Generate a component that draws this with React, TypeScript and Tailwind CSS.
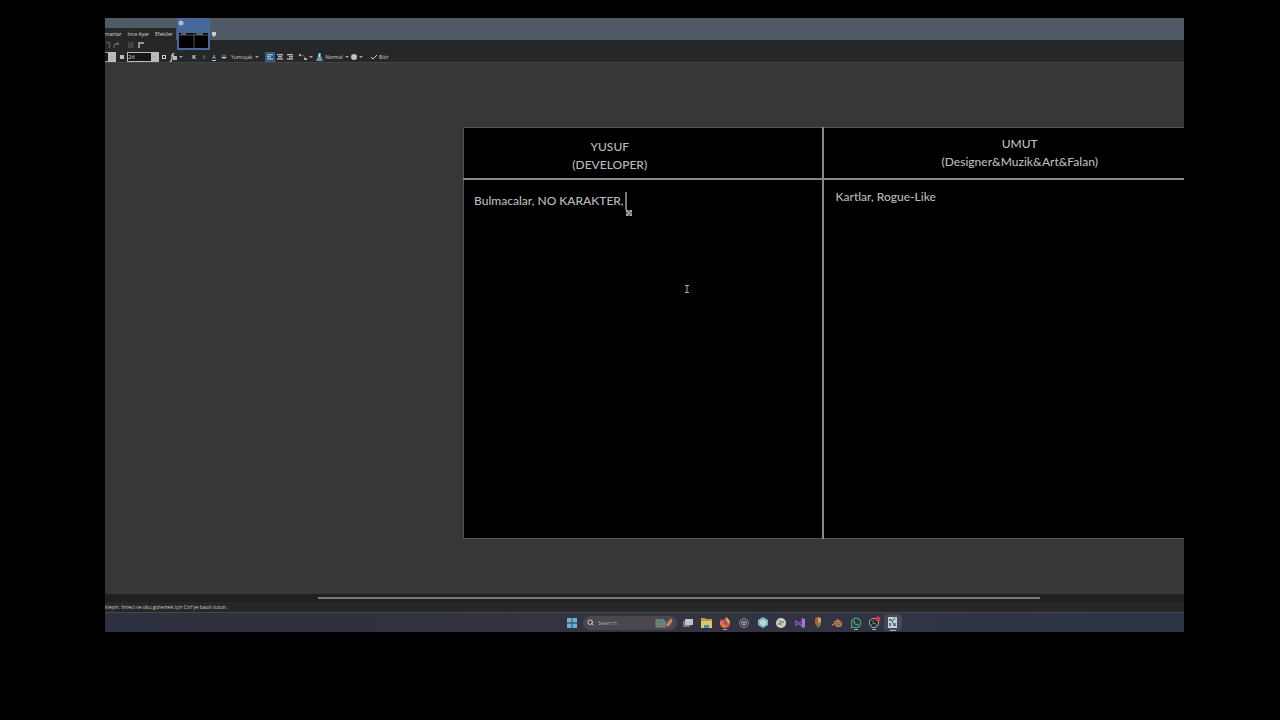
import type { ReactNode } from 'react'
import { Search } from 'lucide-react'
import { FaWhatsapp } from 'react-icons/fa'
import { SiBlender, SiUnity } from 'react-icons/si'

const Caret = () => (
  <svg viewBox="0 0 4 4" className="h-1 w-1 shrink-0" fill="#aaa">
    <path d="M0 1H4L2 3Z" />
  </svg>
)

const ToolButton = ({ label, children }: { label: string; children: ReactNode }) => (
  <button type="button" aria-label={label} className="flex h-2.5 w-2.5 items-center justify-center leading-none">
    {children}
  </button>
)

const AlignIcon = ({ side }: { side: 'left' | 'center' | 'right' }) => {
  const x = { left: 0, center: 1, right: 2 }[side]
  return (
    <svg viewBox="0 0 8 8" className="h-2 w-2" fill="#b4b4b4">
      <rect x="1" y="1" width="6" height="1.4" />
      <rect x={1 + x} y="3" width="4" height="1.4" />
      <rect x="1" y="5.2" width="6" height="1.4" />
    </svg>
  )
}

const TitleBar = () => (
  <header className="relative flex h-[22px] shrink-0 items-end bg-[#505a66]">
    <nav className="flex h-3 w-[71px] items-center gap-1.5 bg-[#252626] text-[5px] leading-none font-medium whitespace-nowrap text-[#ddd]">
      <button type="button">manlar</button>
      <button type="button">İnce Ayar</button>
      <button type="button">Efektler</button>
    </nav>
    <button type="button" aria-label="Image 1" className="absolute top-0 left-[72px] z-10 h-8 w-[33px] bg-[#46689c]">
      <svg viewBox="0 0 33 32" className="h-8 w-[33px]">
        <circle cx="4" cy="5" r="2.5" fill="#aebbd0" />
        <rect x="2" y="15" width="29" height="15" fill="#000" />
        <path d="M2 17H31M17 15V30" stroke="#777" strokeWidth="0.7" />
        <path d="M4 16H9M19 16H26" stroke="#aaa" strokeWidth="1" />
      </svg>
    </button>
    <button type="button" aria-label="Image list" className="ml-[35px] h-[11px] w-1.5">
      <svg viewBox="0 0 6 11" className="h-[11px] w-1.5">
        <path d="M1 3H5V6L3 8L1 6Z" fill="#ccc" />
      </svg>
    </button>
  </header>
)

const Toolbar = () => (
  <section className="h-[23px] shrink-0 border-b border-[#444] bg-[#252728] text-[5px] font-medium text-[#ccc]">
    <svg viewBox="0 0 40 10" className="h-2.5 w-10" fill="none">
      <path d="M1 3L3 2Q6 3 4 8M10 4H14L12 2M14 4Q8 3 9 8" stroke="#777" strokeWidth="0.9" />
      <path d="M23 3H29M23 5H29M23 7H29M24 2V8M27 2V8" stroke="#5c5c5c" strokeWidth="0.8" />
      <path d="M34 8V3H39" stroke="#bbb" strokeWidth="1.5" />
    </svg>
    <div className="mt-px flex h-3 items-center leading-none">
      <span className="h-2.5 w-[3px] border-y border-[#999] bg-[#161616]" />
      <span className="flex h-2.5 w-2 items-center justify-center bg-[#bbb]"><Caret /></span>
      <ToolButton label="Font size down"><span className="ml-0.5 h-1 w-1 bg-[#bbb]" /></ToolButton>
      <label className="ml-px flex h-2.5 w-8 border border-[#bbb] bg-[#161616]">
        <input aria-label="Font size" defaultValue="26" className="w-6 min-w-0 text-[6px] leading-none text-[#ddd] outline-none" />
        <span className="flex w-2 items-center justify-center bg-[#bbb]"><Caret /></span>
      </label>
      <ToolButton label="Font size up"><span className="h-1 w-1 border border-[#ccc]" /></ToolButton>
      <ToolButton label="Metrics">
        <i className="text-[8px] font-bold">f</i>
        <span className="mt-0.5 h-1 w-1 bg-[#bbb]" />
      </ToolButton>
      <Caret />
      <div className="ml-1.5 flex text-[6px]">
        <ToolButton label="Bold"><b>K</b></ToolButton>
        <ToolButton label="Italic"><i>I</i></ToolButton>
        <ToolButton label="Underline"><u>A</u></ToolButton>
        <ToolButton label="Strikethrough"><s>Ü</s></ToolButton>
      </div>
      <button type="button" className="ml-0.5 flex w-7 items-center justify-between">Yumuşak <Caret /></button>
      <button type="button" aria-label="Align left" aria-pressed="true" className="ml-1.5 flex h-2.5 w-2.5 items-center justify-center border border-[#35688f] bg-[#24577f]"><AlignIcon side="left" /></button>
      <ToolButton label="Align center"><AlignIcon side="center" /></ToolButton>
      <ToolButton label="Align right"><AlignIcon side="right" /></ToolButton>
      <button type="button" aria-label="Curve" className="ml-1 flex w-3.5 items-center justify-between">
        <svg viewBox="0 0 8 8" className="h-2 w-2" fill="#aaa">
          <path d="M0 1H2V3H0ZM5 5H8V7H5Z" />
          <path d="M2 2Q5 2 6 5" fill="none" stroke="#888" strokeWidth="0.7" />
        </svg>
        <Caret />
      </button>
      <button type="button" className="ml-[3px] flex w-[33px] items-center justify-between">
        <svg viewBox="0 0 7 8" className="h-2 w-[7px]">
          <path d="M2 0H5V3L7 8H0L2 3Z" fill="#6798a8" />
          <path d="M3 1H4V4H3Z" fill="#ddd" />
        </svg>
        Normal <Caret />
      </button>
      <button type="button" aria-label="Selection clipping" className="ml-0.5 flex w-3 items-center justify-between">
        <span className="h-1.5 w-1.5 rounded-sm bg-[#bbc1c1]" />
        <Caret />
      </button>
      <button type="button" className="ml-2 flex items-center gap-0.5">
        <svg viewBox="0 0 6 6" className="h-1.5 w-1.5" fill="none" stroke="#ccc"><path d="M0 3L2 5L6 1" /></svg>
        Bitir
      </button>
    </div>
  </section>
)

const Canvas = () => (
  <main className="relative flex-1 overflow-hidden bg-[#373737] pt-16 pl-[358px]">
    <table className="w-full table-fixed border-collapse border border-r-0 border-[#555] bg-black font-['Lato','Liberation_Sans',sans-serif] text-[12px] leading-[18px] font-medium text-[#bbb]">
      <thead>
        <tr className="h-[51px] border-b-2 border-[#888]">
          <th className="w-[359px] border-r-2 border-[#888] pt-1.5 pr-[66px] font-medium">YUSUF<br />(DEVELOPER)</th>
          <th className="pl-[32px] font-medium">UMUT<br />(Designer&amp;Muzik&amp;Art&amp;Falan)</th>
        </tr>
      </thead>
      <tbody>
        <tr className="h-[360px] align-top">
          <td className="border-r-2 border-[#888] pt-3 pl-2.5">
            <div className="flex items-center">
              Bulmacalar, NO KARAKTER,
              <span className="relative ml-px h-[18px] w-0.5 bg-[#777]">
                <svg viewBox="0 0 6 6" className="absolute top-[18px] left-px h-1.5 w-1.5">
                  <path d="M0 0H6V6H0Z" fill="#aaa" />
                  <path d="M3 0V2M3 4V6M0 3H2M4 3H6" stroke="#222" />
                </svg>
              </span>
            </div>
          </td>
          <td className="pt-2 pl-3">Kartlar, Rogue-Like</td>
        </tr>
      </tbody>
    </table>
    {/* text cursor */}
    <svg viewBox="0 0 6 8" className="absolute top-[222px] left-[579px] h-2 w-1.5" fill="none" stroke="#aaa">
      <path d="M1 .5H5M1 7.5H5M3 .5V7.5" />
    </svg>
  </main>
)

const AppIcon = ({ name, open, children }: { name: string; open?: boolean; children: ReactNode }) => (
  <button type="button" aria-label={name} className="relative flex h-[19px] w-[18px] items-center justify-center">
    {children}
    {open && <span className="absolute bottom-0.5 h-px w-1 bg-[#aaa]" />}
  </button>
)

const Taskbar = () => (
  <footer className="flex h-5 shrink-0 items-center justify-center border-t border-[#454850] bg-linear-to-r from-[#2d303e] via-[#343342] to-[#2b3443] pl-[176px]">
    <AppIcon name="Start">
      <svg viewBox="0 0 10 10" className="h-2.5 w-2.5" fill="#68b3cf">
        <path d="M0 0H4.6V4.6H0ZM5.4 0H10V4.6H5.4ZM0 5.4H4.6V10H0ZM5.4 5.4H10V10H5.4Z" />
      </svg>
    </AppIcon>
    <label className="mx-0.5 flex h-3.5 w-[94px] items-center gap-1 rounded-full bg-[#4a474f] px-1">
      <Search className="h-[7px] w-[7px] text-[#ddd]" strokeWidth={3} />
      <input placeholder="Search" className="w-[54px] min-w-0 text-[6px] leading-none outline-none placeholder:text-[#aaa]" />
      <svg viewBox="0 0 18 10" className="h-2.5 w-[18px] shrink-0">
        <path d="M1 1H9L11 4V9H1Z" fill="#4b8684" />
        <path d="M1 1V9H11M3 6H10M7 2L10 5" stroke="#b8765c" fill="none" />
        <path d="M11 7Q12 2 17 0Q18 6 13 9Z" fill="#b56b48" />
        <path d="M12 8L17 2" stroke="#dfc1a4" strokeWidth="0.8" />
      </svg>
    </label>
    <div className="flex w-[223px] items-center justify-between">
      <AppIcon name="Task view">
        <svg viewBox="0 0 10 10" className="h-2.5 w-2.5">
          <path d="M0 3H7V9H0Z" fill="#777982" />
          <path d="M2 1H10V7H2Z" fill="#c2c3c8" />
        </svg>
      </AppIcon>
      <AppIcon name="File Explorer">
        <svg viewBox="0 0 11 10" className="h-2.5 w-[11px]">
          <path d="M0 0H4L5 1H11V10H0Z" fill="#b99e48" />
          <path d="M0 3H11V10H0Z" fill="#d8c76b" />
          <path d="M3 7H8V10H3Z" fill="#4c89a8" />
        </svg>
      </AppIcon>
      <AppIcon name="Firefox" open>
        <svg viewBox="0 0 12 12" className="h-3 w-3">
          <path d="M1 4L2 2L4 3Q6 3 7 0Q11 2 11 6Q11 11 6 11Q1 11 1 6Z" fill="#d8543f" />
          <path d="M7 0Q11 3 11 7L8 5Z" fill="#e3b64d" />
          <circle cx="6" cy="6" r="2.3" fill="#8051a0" />
          <path d="M1 5L5 4L4 6Q5 9 9 8Q7 11 4 10Q1 9 1 5Z" fill="#e37b42" />
        </svg>
      </AppIcon>
      <AppIcon name="Unity Hub">
        <span className="flex h-2.5 w-2.5 items-center justify-center rounded-full border border-[#888e98]">
          <SiUnity className="h-1.5 w-1.5 text-[#a4a8af]" />
        </span>
      </AppIcon>
      <AppIcon name="Hex editor">
        <svg viewBox="0 0 10 11" className="h-[11px] w-2.5">
          <path d="M5 0L10 3V8L5 11L0 8V3Z" fill="#82b9bf" />
          <path d="M5 3L8 4V7L5 9L2 7V4Z" fill="#bad9d8" />
        </svg>
      </AppIcon>
      <AppIcon name="Slack">
        <svg viewBox="0 0 10 10" className="h-2.5 w-2.5">
          <circle cx="5" cy="5" r="5" fill="#ccd0d0" />
          <path d="M4 2V5" stroke="#55a7bc" strokeWidth="1.4" />
          <path d="M5 4H8" stroke="#4d9d70" strokeWidth="1.4" />
          <path d="M6 5V8" stroke="#cba34c" strokeWidth="1.4" />
          <path d="M2 6H5" stroke="#bc536f" strokeWidth="1.4" />
        </svg>
      </AppIcon>
      <AppIcon name="Visual Studio">
        <svg viewBox="0 0 10 10" className="h-2.5 w-2.5">
          <path d="M0 3L1 2L8 8V10L1 4V7L3 5L4 6L1 8L0 7Z" fill="#8a58b6" />
          <path d="M4 5L8 0V4L5 6Z" fill="#76469f" />
          <path d="M7 0L10 1V9L7 10Z" fill="#a578c9" />
        </svg>
      </AppIcon>
      <AppIcon name="Design tool">
        <svg viewBox="0 0 8 11" className="h-[11px] w-2">
          <path d="M1 1L4 0V11L1 7Z" fill="#b8573d" />
          <path d="M4 0L7 1V7L4 11Z" fill="#d0a34b" />
          <path d="M4 6L7 5V7L4 11Z" fill="#568b54" />
        </svg>
      </AppIcon>
      <AppIcon name="Blender"><SiBlender className="h-2.5 w-2.5 text-[#d18b50]" /></AppIcon>
      <AppIcon name="WhatsApp" open><FaWhatsapp className="h-3 w-3 text-[#4bc078]" /></AppIcon>
      <AppIcon name="OBS Studio" open>
        <svg viewBox="0 0 13 13" className="h-[13px] w-[13px]">
          <circle cx="6" cy="7" r="4.6" fill="#20232a" stroke="#b0b4b9" />
          <path d="M6 4Q3 5 6 7Q9 7 8 10M6 7Q4 8 3 9" fill="none" stroke="#999" strokeWidth="0.8" />
          <circle cx="10" cy="3" r="2.5" fill="#d43c3b" />
        </svg>
      </AppIcon>
      <button type="button" aria-label="Image editor" className="relative flex h-[17px] w-[18px] items-center justify-center rounded-sm bg-[#454956]">
        <svg viewBox="0 0 9 11" className="h-[11px] w-[9px]">
          <path d="M0 0H9V11H0Z" fill="#c5ced6" />
          <path d="M1 2H4V4H1ZM1 6H3V9H1ZM5 7L8 6V9H5Z" fill="#5a7396" />
          <path d="M7 1L4 5L6 7" stroke="#3f5273" fill="none" />
        </svg>
        <span className="absolute bottom-0 h-px w-1.5 bg-[#bbb]" />
      </button>
    </div>
  </footer>
)

const App = () => (
  <div className="flex h-screen bg-black pt-[18px] pr-24 pb-[88px] pl-[105px] font-['Open_Sans','Noto_Sans',sans-serif]">
    <div className="flex min-w-0 flex-1 flex-col overflow-hidden">
      <TitleBar />
      <Toolbar />
      <Canvas />
      <div className="flex h-2 shrink-0 bg-[#202020] pt-[3px] pr-36 pl-[213px]">
        <div className="h-0.5 flex-1 bg-[#777]" />
      </div>
      <p className="h-2.5 shrink-0 bg-[#272727] text-[5px] leading-[10px] font-medium text-[#ccc]">kleyin. İmleci ve oku gizlemek için Ctrl'ye basılı tutun.</p>
      <Taskbar />
    </div>
  </div>
)

export default App
